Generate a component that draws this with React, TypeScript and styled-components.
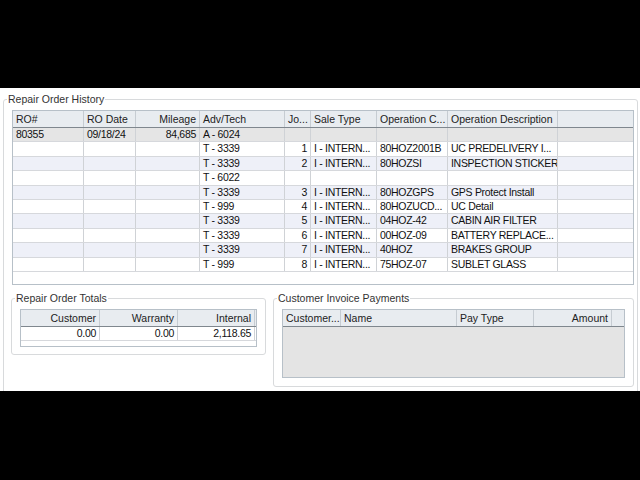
import styled, { createGlobalStyle } from 'styled-components';

type Row = {
  ro?: string;
  date?: string;
  mileage?: string;
  tech: string;
  job?: string;
  sale?: string;
  opCode?: string;
  desc?: string;
};

const rows: Row[] = [
  { ro: '80355', date: '09/18/24', mileage: '84,685', tech: 'A - 6024' },
  { tech: 'T - 3339', job: '1', sale: 'I - INTERN...', opCode: '80HOZ2001B', desc: 'UC PREDELIVERY I...' },
  { tech: 'T - 3339', job: '2', sale: 'I - INTERN...', opCode: '80HOZSI', desc: 'INSPECTION STICKER' },
  { tech: 'T - 6022' },
  { tech: 'T - 3339', job: '3', sale: 'I - INTERN...', opCode: '80HOZGPS', desc: 'GPS Protect Install' },
  { tech: 'T - 999', job: '4', sale: 'I - INTERN...', opCode: '80HOZUCD...', desc: 'UC Detail' },
  { tech: 'T - 3339', job: '5', sale: 'I - INTERN...', opCode: '04HOZ-42', desc: 'CABIN AIR FILTER' },
  { tech: 'T - 3339', job: '6', sale: 'I - INTERN...', opCode: '00HOZ-09', desc: 'BATTERY REPLACE...' },
  { tech: 'T - 3339', job: '7', sale: 'I - INTERN...', opCode: '40HOZ', desc: 'BRAKES GROUP' },
  { tech: 'T - 999', job: '8', sale: 'I - INTERN...', opCode: '75HOZ-07', desc: 'SUBLET GLASS' },
];

const historyCols = '71px 52px 64px 85px 26px 66px 71px 110px 1fr';
const totalsCols = '79px 78px 77px 1fr';
const paymentsCols = '58px 116px 77px 78px 1fr';

const App = () => {
  return (
    <>
      <GlobalStyle />
      <Screen>
        <OuterGroup>
          <Legend>Repair Order History</Legend>
          <Grid $height={175}>
            <HeaderRow $cols={historyCols}>
              <HeadCell>RO#</HeadCell>
              <HeadCell>RO Date</HeadCell>
              <HeadCell $right>Mileage</HeadCell>
              <HeadCell>Adv/Tech</HeadCell>
              <HeadCell>Jo...</HeadCell>
              <HeadCell>Sale Type</HeadCell>
              <HeadCell>Operation C...</HeadCell>
              <HeadCell>Operation Description</HeadCell>
              <HeadCell $last />
            </HeaderRow>
            {rows.map((r, i) => (
              <DataRow key={i} $cols={historyCols} $tone={i === 0 ? 'sel' : i % 2 === 0 ? 'alt' : 'plain'}>
                <Cell>{r.ro}</Cell>
                <Cell>{r.date}</Cell>
                <Cell $right>{r.mileage}</Cell>
                <Cell>{r.tech}</Cell>
                <Cell $right>{r.job}</Cell>
                <Cell>{r.sale}</Cell>
                <Cell>{r.opCode}</Cell>
                <Cell>{r.desc}</Cell>
                <Cell $last />
              </DataRow>
            ))}
          </Grid>

          <LowerRow>
            <SubGroup $width={255} $height={57}>
              <Legend>Repair Order Totals</Legend>
              <Grid $height={38}>
                <HeaderRow $cols={totalsCols}>
                  <HeadCell $right>Customer</HeadCell>
                  <HeadCell $right>Warranty</HeadCell>
                  <HeadCell $right>Internal</HeadCell>
                  <HeadCell $last />
                </HeaderRow>
                <DataRow $cols={totalsCols} $tone="plain" $height={14}>
                  <Cell $right>0.00</Cell>
                  <Cell $right>0.00</Cell>
                  <Cell $right>2,118.65</Cell>
                  <Cell $last />
                </DataRow>
              </Grid>
            </SubGroup>

            <SubGroup $width={361} $height={89}>
              <Legend>Customer Invoice Payments</Legend>
              <Grid $height={69} $empty>
                <HeaderRow $cols={paymentsCols}>
                  <HeadCell>Customer...</HeadCell>
                  <HeadCell>Name</HeadCell>
                  <HeadCell>Pay Type</HeadCell>
                  <HeadCell $right>Amount</HeadCell>
                  <HeadCell $last />
                </HeaderRow>
              </Grid>
            </SubGroup>
          </LowerRow>
        </OuterGroup>
      </Screen>
    </>
  );
};

export default App;

const GlobalStyle = createGlobalStyle`
  html, body {
    margin: 0;
    background: #000;
  }
  body {
    font-family: "Liberation Sans", Arial, sans-serif;
    font-size: 10.5px;
    color: #111;
  }
  * {
    box-sizing: border-box;
  }
`;

const Screen = styled.div`
  margin-top: 88px;
  height: 303px;
  width: 640px;
  background: #fff;
  overflow: hidden;
`;

const OuterGroup = styled.div`
  position: relative;
  margin: 11px 2px 0 3px;
  height: 320px;
  padding: 10px 3px 0 8px;
  border: 1px solid #d8dadc;
  border-radius: 3px;
`;

const SubGroup = styled.div<{ $width: number; $height: number }>`
  position: relative;
  width: ${({ $width }) => $width}px;
  height: ${({ $height }) => $height}px;
  padding: 10px 8px 0 8px;
  border: 1px solid #d8dadc;
  border-radius: 3px;
`;

const Legend = styled.span`
  position: absolute;
  top: -7px;
  left: 3px;
  padding: 0 1px;
  line-height: 13px;
  background: #fff;
  color: #333;
  white-space: nowrap;
`;

const LowerRow = styled.div`
  display: flex;
  align-items: flex-start;
  gap: 7px;
  margin-top: 13px;
  margin-left: -1px;
`;

const Grid = styled.div<{ $height: number; $empty?: boolean }>`
  height: ${({ $height }) => $height}px;
  border: 1px solid #b7c0c8;
  background: ${({ $empty }) => ($empty ? '#e4e4e4' : '#fff')};
  overflow: hidden;
`;

const HeaderRow = styled.div<{ $cols: string }>`
  display: grid;
  grid-template-columns: ${({ $cols }) => $cols};
  height: 17px;
  background: #e8ecf0;
  border-bottom: 1px solid #7f878e;
`;

const HeadCell = styled.div<{ $right?: boolean; $last?: boolean }>`
  padding: 0 3px;
  line-height: 16px;
  text-align: ${({ $right }) => ($right ? 'right' : 'left')};
  border-right: ${({ $last }) => ($last ? 'none' : '1px solid #c6ccd2')};
  white-space: nowrap;
  overflow: hidden;
  color: #222;
`;

const toneBg = { sel: '#e5e5e5', alt: '#eef0f8', plain: '#fff' };

const DataRow = styled.div<{ $cols: string; $tone: keyof typeof toneBg; $height?: number }>`
  display: grid;
  grid-template-columns: ${({ $cols }) => $cols};
  height: ${({ $height }) => $height ?? 14.4}px;
  background: ${({ $tone }) => toneBg[$tone]};
  border-bottom: 1px solid #d6d8dc;
`;

const Cell = styled.div<{ $right?: boolean; $last?: boolean }>`
  padding: 0 ${({ $right }) => ($right ? 3 : 1)}px 0 3px;
  line-height: 13px;
  letter-spacing: -0.3px;
  text-align: ${({ $right }) => ($right ? 'right' : 'left')};
  border-right: ${({ $last }) => ($last ? 'none' : '1px solid #cfd2d6')};
  white-space: nowrap;
  overflow: hidden;
`;
